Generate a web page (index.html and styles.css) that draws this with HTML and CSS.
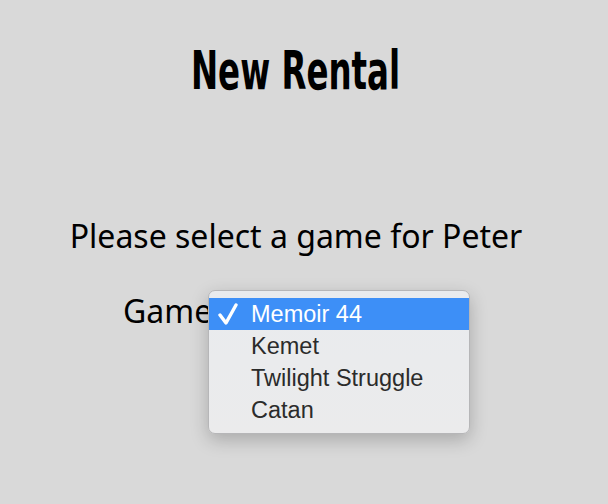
FILE: index.html
```html
<!DOCTYPE html>
<html>
<head>
<meta charset="utf-8">
<link rel="stylesheet" href="styles.css">
</head>
<body>
<main class="page">
  <h1 class="title"><span class="title-text">New Rental</span></h1>
  <p class="prompt">Please select a game for Peter</p>
  <div class="field">
    <span class="label">Game</span>
    <div class="select">
      <ul class="menu">
        <li class="option selected"><span class="check"><svg width="20" height="22" viewBox="0 0 20 22"><path d="M2 12 L8 20 L18 2" fill="none" stroke="#fff" stroke-width="3.4" stroke-linecap="round" stroke-linejoin="round"/></svg></span>Memoir 44</li>
        <li class="option"><span class="check"></span>Kemet</li>
        <li class="option"><span class="check"></span>Twilight Struggle</li>
        <li class="option"><span class="check"></span>Catan</li>
      </ul>
    </div>
  </div>
</main>
</body>
</html>
```

FILE: styles.css
```css
html, body {
  margin: 0;
  padding: 0;
  background: #d9d9d9;
  height: 100%;
}
.page {
  display: flex;
  flex-direction: column;
  align-items: center;
  padding-right: 16px;
  font-family: "Noto Sans", "Open Sans", sans-serif;
  color: #000;
}
.title {
  margin: 41px 0 0 0;
  height: 60px;
  line-height: 60px;
  font-family: "DejaVu Sans", sans-serif;
  font-stretch: condensed;
  font-weight: bold;
  font-size: 54px;
}
.title-text {
  display: inline-block;
  transform: scaleX(0.668);
}
.prompt {
  margin: 113px 0 0 0;
  font-size: 32px;
  line-height: 44px;
}
.field {
  margin-top: 31px;
  display: flex;
  align-items: center;
  align-self: flex-start;
  margin-left: 123px;
  font-size: 32px;
  line-height: 44px;
}
.label {
  width: 85px;
  white-space: nowrap;
}
.select {
  position: relative;
  width: 262px;
  height: 44px;
}
.menu {
  position: absolute;
  left: 0;
  top: 1px;
  margin: 0;
  padding: 7px 0;
  list-style: none;
  width: 262px;
  box-sizing: border-box;
  background: linear-gradient(#e9ebee, #ebebec);
  border: 1px solid #b6b6b8;
  border-radius: 7px;
  box-shadow: 0 6px 18px rgba(0,0,0,0.22);
  font-family: "Liberation Sans", Arial, sans-serif;
  font-size: 23.5px;
}
.option {
  display: flex;
  align-items: center;
  height: 32px;
  color: #2b2b2b;
}
.option.selected {
  background: #3d8ff7;
  color: #fff;
}
.check {
  display: flex;
  align-items: center;
  width: 42px;
  padding-left: 9px;
  box-sizing: border-box;
}
```
